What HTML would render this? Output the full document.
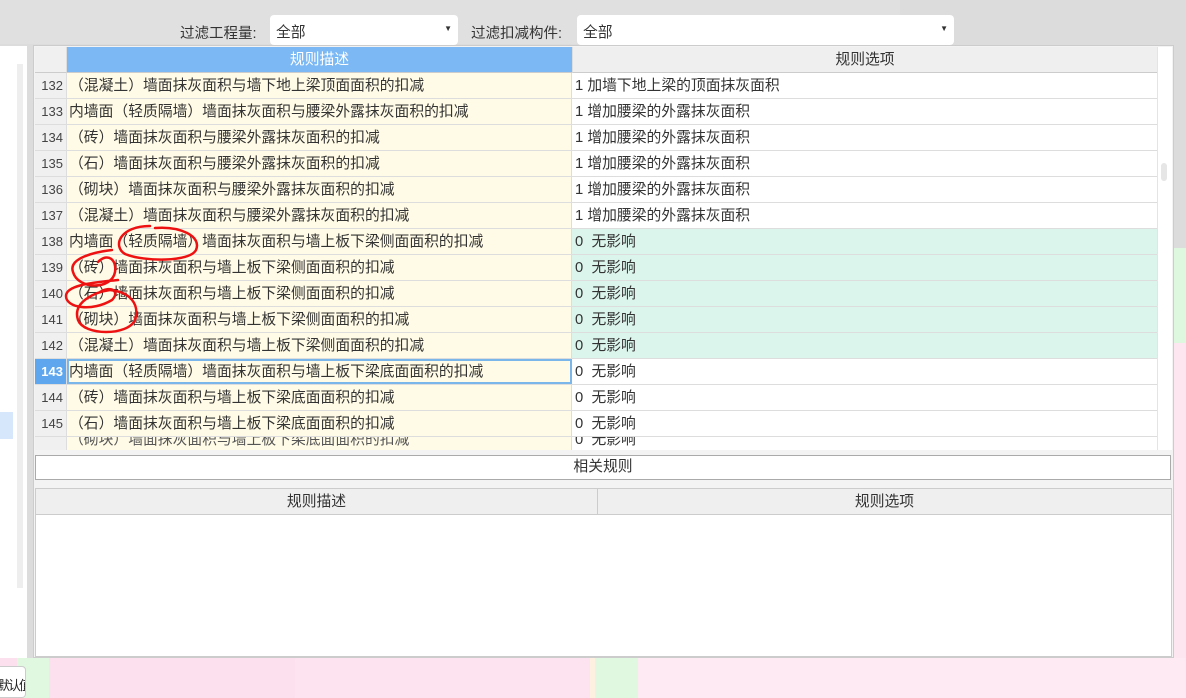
<!DOCTYPE html><html><head><meta charset="utf-8"><style>
*{margin:0;padding:0;box-sizing:border-box}
body{width:1186px;height:698px;overflow:hidden;background:#dcdcdc;font-family:"Liberation Sans","Noto Sans CJK SC",sans-serif;font-size:14.8px;color:#333;position:relative}
.a{position:absolute}
.row{position:absolute;left:35px;width:1122px;height:26px;border-bottom:1px solid #ddd;display:flex}
.n{width:32px;background:#f0f0f0;border-right:1px solid #ddd;text-align:right;padding-right:3px;line-height:26px;font-size:13px;color:#444}
.d{width:505px;background:#fffbe6;border-right:1px solid #ddd;line-height:26px;padding-left:2px;white-space:nowrap;overflow:hidden}
.o{flex:1;background:#fff;line-height:26px;padding-left:3px;white-space:nowrap}
.g .o{background:#dcf5ec}
.sel{border:2px solid #7ab6ea;background:#fffbe6}
</style></head><body>
<div class="a" style="left:0;top:0;width:900px;height:44px;background:#e0e0e0"></div>
<div class="a" style="left:1172px;top:248px;width:14px;height:95px;background:#def7df"></div>
<div class="a" style="left:1172px;top:343px;width:14px;height:355px;background:#fde6f0"></div>
<div class="a" style="left:180px;top:22px;font-size:14.5px">过滤工程量:</div>
<div class="a" style="left:270px;top:15px;width:188px;height:30px;background:#fff;border-radius:4px;padding:6px 6px">全部<span style="position:absolute;right:6px;top:9px;font-size:8px">▼</span></div>
<div class="a" style="left:471px;top:22px;font-size:14.5px">过滤扣减构件:</div>
<div class="a" style="left:577px;top:15px;width:377px;height:30px;background:#fff;border-radius:4px;padding:6px 6px">全部<span style="position:absolute;right:6px;top:9px;font-size:8px">▼</span></div>
<div class="a" style="left:0;top:46px;width:27px;height:612px;background:#fff"></div>
<div class="a" style="left:17px;top:64px;width:6px;height:524px;background:#eee"></div>
<div class="a" style="left:0;top:412px;width:13px;height:27px;background:#d6e6fb"></div>
<div class="a" style="left:33px;top:45px;width:1141px;height:613px;background:#f3f3f3;border:1px solid #ccc"></div>
<div class="a" style="left:35px;top:47px;width:1137px;height:403px;background:#fff"></div>
<div class="a" style="left:35px;top:47px;width:32px;height:26px;background:#f0f0f0;border-right:1px solid #ddd;border-bottom:1px solid #ccc"></div>
<div class="a" style="left:67px;top:47px;width:505px;height:26px;background:#7cb9f4;color:#fff;text-align:center;line-height:26px;border-bottom:1px solid #ccc">规则描述</div>
<div class="a" style="left:572px;top:47px;width:585px;height:26px;background:#efefef;text-align:center;line-height:26px;border-bottom:1px solid #ccc;border-left:1px solid #ddd">规则选项</div>
<div class="a" style="left:1157px;top:47px;width:15px;height:403px;background:#fff;border-left:1px solid #e4e4e4"></div>
<div class="a" style="left:1161px;top:163px;width:6px;height:18px;background:#e6e6e6;border-radius:3px"></div>
<div class="row" style="top:73px"><div class="n">132</div><div class="d">（混凝土）墙面抹灰面积与墙下地上梁顶面面积的扣减</div><div class="o">1 加墙下地上梁的顶面抹灰面积</div></div>
<div class="row" style="top:99px"><div class="n">133</div><div class="d">内墙面（轻质隔墙）墙面抹灰面积与腰梁外露抹灰面积的扣减</div><div class="o">1 增加腰梁的外露抹灰面积</div></div>
<div class="row" style="top:125px"><div class="n">134</div><div class="d">（砖）墙面抹灰面积与腰梁外露抹灰面积的扣减</div><div class="o">1 增加腰梁的外露抹灰面积</div></div>
<div class="row" style="top:151px"><div class="n">135</div><div class="d">（石）墙面抹灰面积与腰梁外露抹灰面积的扣减</div><div class="o">1 增加腰梁的外露抹灰面积</div></div>
<div class="row" style="top:177px"><div class="n">136</div><div class="d">（砌块）墙面抹灰面积与腰梁外露抹灰面积的扣减</div><div class="o">1 增加腰梁的外露抹灰面积</div></div>
<div class="row" style="top:203px"><div class="n">137</div><div class="d">（混凝土）墙面抹灰面积与腰梁外露抹灰面积的扣减</div><div class="o">1 增加腰梁的外露抹灰面积</div></div>
<div class="row g" style="top:229px"><div class="n">138</div><div class="d">内墙面（轻质隔墙）墙面抹灰面积与墙上板下梁侧面面积的扣减</div><div class="o">0 &nbsp;无影响</div></div>
<div class="row g" style="top:255px"><div class="n">139</div><div class="d">（砖）墙面抹灰面积与墙上板下梁侧面面积的扣减</div><div class="o">0 &nbsp;无影响</div></div>
<div class="row g" style="top:281px"><div class="n">140</div><div class="d">（石）墙面抹灰面积与墙上板下梁侧面面积的扣减</div><div class="o">0 &nbsp;无影响</div></div>
<div class="row g" style="top:307px"><div class="n">141</div><div class="d">（砌块）墙面抹灰面积与墙上板下梁侧面面积的扣减</div><div class="o">0 &nbsp;无影响</div></div>
<div class="row g" style="top:333px"><div class="n">142</div><div class="d">（混凝土）墙面抹灰面积与墙上板下梁侧面面积的扣减</div><div class="o">0 &nbsp;无影响</div></div>
<div class="row" style="top:359px"><div class="n" style="background:#5ea7ee;color:#fff;font-weight:bold">143</div><div class="d sel" style="line-height:22px;padding-left:0">内墙面（轻质隔墙）墙面抹灰面积与墙上板下梁底面面积的扣减</div><div class="o">0 &nbsp;无影响</div></div>
<div class="row" style="top:385px"><div class="n">144</div><div class="d">（砖）墙面抹灰面积与墙上板下梁底面面积的扣减</div><div class="o">0 &nbsp;无影响</div></div>
<div class="row" style="top:411px"><div class="n">145</div><div class="d">（石）墙面抹灰面积与墙上板下梁底面面积的扣减</div><div class="o">0 &nbsp;无影响</div></div>
<div class="row" style="top:437px;height:13px;overflow:hidden;border:0"><div class="n"></div><div class="d" style="line-height:6px;color:#555">（砌块）墙面抹灰面积与墙上板下梁底面面积的扣减</div><div class="o" style="line-height:6px">0 &nbsp;无影响</div></div>
<div class="a" style="left:35px;top:450px;width:1137px;height:5px;background:#f3f3f3"></div>
<div class="a" style="left:35px;top:455px;width:1136px;height:25px;background:#fff;border:1px solid #aaa;text-align:center;line-height:23px">相关规则</div>
<div class="a" style="left:35px;top:488px;width:1137px;height:169px;background:#fff;border:1px solid #ccc"></div>
<div class="a" style="left:36px;top:489px;width:562px;height:26px;background:#efefef;border-bottom:1px solid #ccc;border-right:1px solid #ccc;text-align:center;line-height:26px">规则描述</div>
<div class="a" style="left:598px;top:489px;width:573px;height:26px;background:#efefef;border-bottom:1px solid #ccc;text-align:center;line-height:26px">规则选项</div>
<div class="a" style="left:0;top:658px;width:1186px;height:40px;background:#fde0ee"></div>
<div class="a" style="left:17px;top:658px;width:32px;height:40px;background:#e0f8e0"></div>
<div class="a" style="left:295px;top:658px;width:295px;height:40px;background:#fde2ef"></div>
<div class="a" style="left:590px;top:658px;width:5px;height:40px;background:#fdf0e0"></div>
<div class="a" style="left:595px;top:658px;width:43px;height:40px;background:#e0f8e0"></div>
<div class="a" style="left:638px;top:658px;width:548px;height:40px;background:#fdeaf2"></div>
<div class="a" style="left:0;top:666px;width:26px;height:32px;background:#fff;border:1px solid #ccc;border-left:0;border-radius:0 4px 4px 0;overflow:hidden"><span style="position:absolute;left:-3px;top:8px;font-size:13px;letter-spacing:-2px;color:#222;white-space:nowrap">默认值</span></div>
<svg class="a" style="left:0;top:0" width="1186" height="698"><g fill="none" stroke="#e11" stroke-width="2.5" stroke-linecap="round">
<path d="M150 226 C120 226 112 246 125 254 C145 262 190 262 196 250 C202 236 180 226 155 228"/>
<path d="M112 250 C95 252 68 258 73 272 C78 290 112 290 115 272 C117 260 108 252 98 262"/>
<path d="M118 280 C100 282 66 284 66 296 C66 308 92 312 112 300 C120 292 112 285 100 292"/>
<path d="M110 290 C95 292 72 302 78 320 C84 336 128 336 135 320 C140 304 130 292 110 290"/>
</g></svg>
</body></html>
